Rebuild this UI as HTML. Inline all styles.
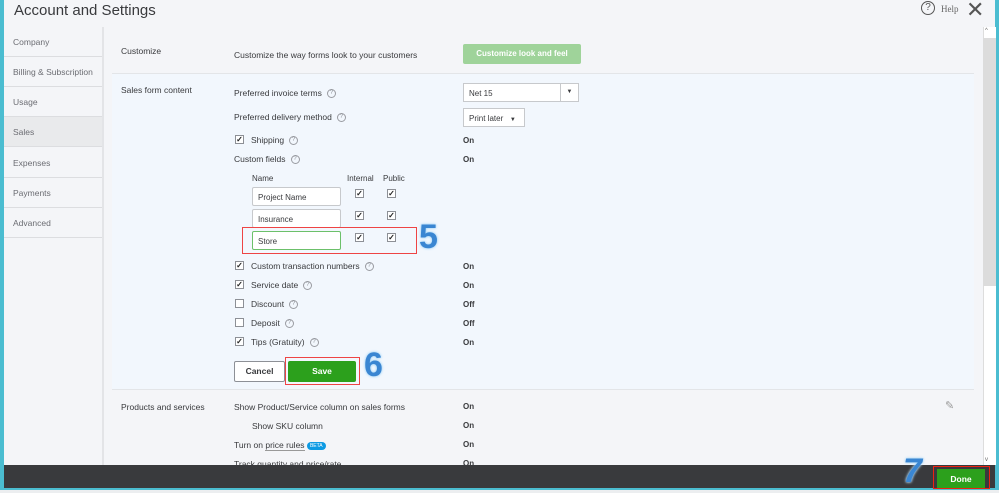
<!DOCTYPE html>
<html><head><style>
*{margin:0;padding:0;box-sizing:border-box}
body{width:999px;height:493px;overflow:hidden;position:relative;background:#f4f5f8;font-family:"Liberation Sans",sans-serif;color:#393a3d;font-size:8.5px}
.a{position:absolute;white-space:nowrap}
.side div{position:absolute;left:4px;width:98px;height:30px;border-bottom:1px solid #dcdde0;padding:10px 0 0 9px;color:#6b6c72;font-size:8.5px}
.cb{position:absolute;width:9px;height:9px;border:1px solid #8d9096;background:#fff;font-size:8px;line-height:7px;text-align:center;color:#222;font-weight:bold}
.q{display:inline-block;width:9px;height:9px;border:1px solid #9a9ca2;border-radius:50%;font-size:6px;line-height:7px;text-align:center;color:#8d9096;margin-left:5px;vertical-align:middle}
.inp{position:absolute;left:252px;width:89px;height:19px;background:#fff;border:1px solid #c7c9cc;border-radius:2px;padding:5px 0 0 5px;font-size:8px}
.on{position:absolute;left:463px;font-weight:bold;font-size:8px}
.num{position:absolute;font-size:34px;font-weight:bold;color:#3a86d2;text-shadow:0 0 2px #9dd0f5,0 0 3px #bfe3fb;font-family:"Liberation Sans",sans-serif}
</style></head><body>
<div class="a" style="left:0;top:0;width:4px;height:493px;background:#4bbdd1"></div>
<div class="a" style="left:995px;top:0;width:4px;height:493px;background:#4bbdd1"></div>
<div class="a" style="left:14px;top:2px;font-size:15px;color:#393a3d">Account and Settings</div>
<div class="a" style="left:921px;top:1px;width:14px;height:14px;border:1.3px solid #555;border-radius:50%;font-size:10px;text-align:center;line-height:12px;color:#555">?</div>
<div class="a" style="left:941px;top:4px;font-family:'Liberation Serif',serif;font-size:9px;color:#666">Help</div>
<div class="a" style="left:966px;top:-3px;font-size:22px;color:#555">✕</div>
<div class="side">
<div style="top:27px">Company</div><div style="top:57px">Billing &amp; Subscription</div><div style="top:87px">Usage</div>
<div style="top:117px;background:#e9eaec">Sales</div><div style="top:148px">Expenses</div><div style="top:178px">Payments</div><div style="top:208px">Advanced</div>
</div>
<div class="a" style="left:102px;top:27px;width:2px;height:438px;background:#e3e4e7"></div>
<div class="a" style="left:112px;top:73px;width:862px;height:317px;background:#f2f7fd;border-top:1px solid #e3e5e8;border-bottom:1px solid #e3e5e8"></div>
<div class="a" style="left:121px;top:46px">Customize</div>
<div class="a" style="left:234px;top:50px">Customize the way forms look to your customers</div>
<div class="a" style="left:463px;top:44px;width:118px;height:20px;background:#9fd39a;border-radius:2px;color:#fff;font-weight:bold;text-align:center;line-height:20px;font-size:8px">Customize look and feel</div>
<div class="a" style="left:121px;top:85px">Sales form content</div>
<div class="a" style="left:234px;top:88px">Preferred invoice terms<span class="q">?</span></div>
<div class="a" style="left:463px;top:83px;width:116px;height:19px;background:#fff;border:1px solid #c7c9cc;font-size:8px;padding:5px 0 0 5px">Net 15</div>
<div class="a" style="left:560px;top:84px;width:18px;height:17px;border-left:1px solid #c7c9cc;font-size:6px;text-align:center;line-height:17px">▼</div>
<div class="a" style="left:234px;top:112px">Preferred delivery method<span class="q">?</span></div>
<div class="a" style="left:463px;top:108px;width:62px;height:19px;background:#fff;border:1px solid #c7c9cc;font-size:8px;padding:5px 0 0 5px">Print later &nbsp;&nbsp;<span style="font-size:6px">▼</span></div>
<div class="cb" style="left:235px;top:135px">✓</div><div class="a" style="left:251px;top:135px">Shipping<span class="q">?</span></div><div class="on" style="top:136px">On</div>
<div class="a" style="left:234px;top:154px">Custom fields<span class="q">?</span></div><div class="on" style="top:155px">On</div>
<div class="a" style="left:252px;top:174px;font-size:8px">Name</div><div class="a" style="left:347px;top:174px;font-size:8px">Internal</div><div class="a" style="left:383px;top:174px;font-size:8px">Public</div>
<div class="inp" style="top:187px">Project Name</div>
<div class="inp" style="top:209px">Insurance</div>
<div class="inp" style="top:231px;border-color:#6cc06a">Store</div>
<div class="cb" style="left:355px;top:189px">✓</div><div class="cb" style="left:387px;top:189px">✓</div>
<div class="cb" style="left:355px;top:211px">✓</div><div class="cb" style="left:387px;top:211px">✓</div>
<div class="cb" style="left:355px;top:233px">✓</div><div class="cb" style="left:387px;top:233px">✓</div>
<div class="a" style="left:242px;top:227px;width:175px;height:27px;border:1px solid #e44"></div>
<div class="num" style="left:419px;top:218px">5</div>
<div class="cb" style="left:235px;top:261px">✓</div><div class="a" style="left:251px;top:261px">Custom transaction numbers<span class="q">?</span></div><div class="on" style="top:262px">On</div>
<div class="cb" style="left:235px;top:280px">✓</div><div class="a" style="left:251px;top:280px">Service date<span class="q">?</span></div><div class="on" style="top:281px">On</div>
<div class="cb" style="left:235px;top:299px"></div><div class="a" style="left:251px;top:299px">Discount<span class="q">?</span></div><div class="on" style="top:300px">Off</div>
<div class="cb" style="left:235px;top:318px"></div><div class="a" style="left:251px;top:318px">Deposit<span class="q">?</span></div><div class="on" style="top:319px">Off</div>
<div class="cb" style="left:235px;top:337px">✓</div><div class="a" style="left:251px;top:337px">Tips (Gratuity)<span class="q">?</span></div><div class="on" style="top:338px">On</div>
<div class="a" style="left:234px;top:361px;width:51px;height:21px;background:#fff;border:1px solid #8d9096;border-radius:2px;font-weight:bold;text-align:center;line-height:19px;font-size:8.5px">Cancel</div>
<div class="a" style="left:288px;top:361px;width:68px;height:21px;background:#2ca01c;border-radius:2px;color:#fff;font-weight:bold;text-align:center;line-height:21px;font-size:8.5px">Save</div>
<div class="a" style="left:285px;top:357px;width:75px;height:28px;border:1px solid #e44"></div>
<div class="num" style="left:364px;top:346px">6</div>
<div class="a" style="left:121px;top:402px">Products and services</div>
<div class="a" style="left:234px;top:402px">Show Product/Service column on sales forms</div><div class="on" style="top:402px">On</div>
<div class="a" style="left:252px;top:421px">Show SKU column</div><div class="on" style="top:421px">On</div>
<div class="a" style="left:234px;top:440px">Turn on <span style="border-bottom:1px solid #999">price rules</span> <span style="background:#0d9ae3;color:#fff;font-size:5px;border-radius:5px;padding:1px 3px;vertical-align:middle">BETA</span></div><div class="on" style="top:440px">On</div>
<div class="a" style="left:234px;top:459px">Track quantity and price/rate</div><div class="on" style="top:459px">On</div>
<div class="a" style="left:945px;top:399px;font-size:11px;color:#999">✎</div>
<div class="a" style="left:983px;top:27px;width:13px;height:438px;background:#fff;border-left:1px solid #ddd"></div>
<div class="a" style="left:983px;top:38px;width:13px;height:248px;background:#dcdcdc"></div>
<div class="a" style="left:985px;top:28px;font-size:6px;color:#666">^</div>
<div class="a" style="left:985px;top:457px;font-size:6px;color:#666">v</div>
<div class="a" style="left:4px;top:465px;width:991px;height:23px;background:#393a3d"></div>
<div class="a" style="left:0;top:488px;width:999px;height:2px;background:#4bbdd1"></div>
<div class="a" style="left:0;top:490px;width:999px;height:3px;background:#eceef0"></div>
<div class="a" style="left:937px;top:469px;width:48px;height:19px;background:#2ca01c;color:#fff;font-weight:bold;text-align:center;line-height:20px;font-size:8.5px">Done</div>
<div class="a" style="left:933px;top:466px;width:57px;height:23px;border:1px solid #e21"></div>
<div class="num" style="left:903px;top:452px;font-style:italic">7</div>
</body></html>
